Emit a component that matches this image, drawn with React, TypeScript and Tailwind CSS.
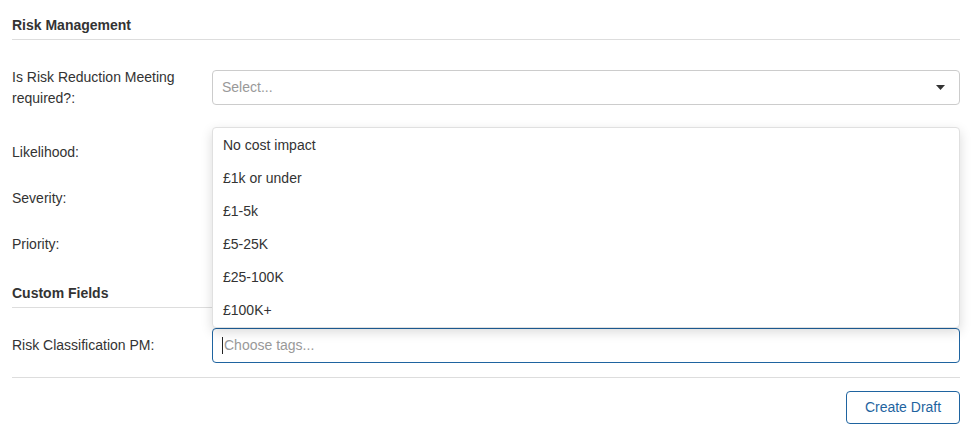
import React from "react";

const options = ["No cost impact", "£1k or under", "£1-5k", "£5-25K", "£25-100K", "£100K+"];

function Heading({ children, className = "" }: { children: React.ReactNode; className?: string }) {
  return (
    <div className={`border-b border-[#dddddd] pb-[4px] text-[14px] leading-[20px] font-semibold text-[#333333] ${className}`}>
      {children}
    </div>
  );
}

function SelectBox({ placeholder }: { placeholder?: string }) {
  return (
    <div className="flex h-[35px] flex-1 items-center rounded-[4px] border border-[#cccccc] bg-white pl-[9px] pr-[14px]">
      <span className="flex-1 text-[14px] text-[#999999]">{placeholder}</span>
      <svg width="9" height="5" viewBox="0 0 9 5" className="text-[#333333]">
        <path d="M0 0 H9 L4.5 5 Z" fill="currentColor" />
      </svg>
    </div>
  );
}

export default function App() {
  return (
    <div
      className="relative min-h-[441px] bg-white pl-[12px] pr-[20px] pt-[15px] text-[#333333]"
      style={{ fontFamily: '"Liberation Sans", Arial, sans-serif' }}
    >
      <Heading>Risk Management</Heading>

      <div className="mt-[26px] flex h-[43px] items-center">
        <div className="w-[200px] text-[14px] leading-[21px]">
          Is Risk Reduction Meeting
          <br />
          required?:
        </div>
        <SelectBox placeholder="Select..." />
      </div>

      <div className="mt-[26px] flex h-[35px] items-center">
        <div className="w-[200px] text-[14px] leading-[21px]">Likelihood:</div>
        <SelectBox />
      </div>
      <div className="mt-[11px] flex h-[35px] items-center">
        <div className="w-[200px] text-[14px] leading-[21px]">Severity:</div>
        <SelectBox />
      </div>
      <div className="mt-[11px] flex h-[35px] items-center">
        <div className="w-[200px] text-[14px] leading-[21px]">Priority:</div>
        <SelectBox />
      </div>

      <Heading className="mt-[21px]">Custom Fields</Heading>

      <div className="mt-[20px] flex h-[35px] items-center">
        <div className="w-[200px] text-[14px] leading-[21px]">Risk Classification PM:</div>
        <div className="flex h-[35px] flex-1 items-center rounded-[4px] border border-[#1f64a0] bg-white pl-[9px]">
          <span className="mr-[1px] h-[17px] w-[1px] bg-[#222222]" />
          <span className="text-[14px] text-[#999999]">Choose tags...</span>
        </div>
      </div>

      <div className="mt-[14px] border-t border-[#dddddd]" />

      <div className="mt-[13px] flex justify-end">
        <button className="h-[33px] w-[114px] rounded-[4px] border border-[#1f64a0] bg-white text-[14px] text-[#1f64a0]">
          Create Draft
        </button>
      </div>

      <div className="absolute left-[212px] top-[127px] w-[748px] rounded-[4px] border border-[#e0e0e0] bg-white shadow-[0_4px_12px_rgba(0,0,0,0.15)]">
        <div className="flex h-[199px] flex-col justify-center">
          {options.map((o) => (
            <div key={o} className="flex h-[33px] items-center pl-[10px] text-[14px] text-[#333333]">
              {o}
            </div>
          ))}
        </div>
      </div>
    </div>
  );
}
